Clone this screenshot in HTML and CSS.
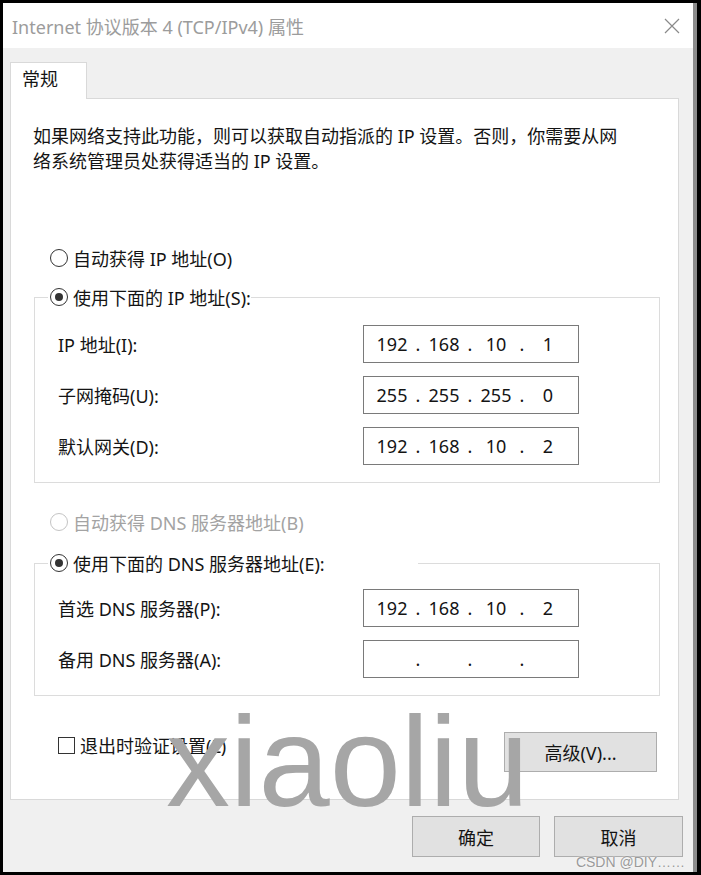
FILE: index.html
```html
<!DOCTYPE html>
<html lang="zh-CN">
<head>
<meta charset="utf-8">
<title>Internet 协议版本 4 (TCP/IPv4) 属性</title>
<link rel="stylesheet" href="styles.css">
</head>
<body>
<div class="window">
  <div class="titlebar">
    <span class="title">Internet 协议版本 4 (TCP/IPv4) 属性</span>
    <svg class="close" viewBox="0 0 16 16" width="16" height="16"><path d="M1 1 L15 15 M15 1 L1 15" stroke="#8a8a8a" stroke-width="1.2" fill="none"/></svg>
  </div>
  <div class="content">
    <div class="tab">常规</div>
    <div class="panel">
      <p class="desc">如果网络支持此功能，则可以获取自动指派的 IP 设置。否则，你需要从网<br>络系统管理员处获得适当的 IP 设置。</p>

      <div class="radio-row first"><span class="radio"></span><span>自动获得 IP 地址(O)</span></div>

      <fieldset class="group g1">
        <legend class="legend"><span class="radio checked"></span><span>使用下面的 IP 地址(S):</span></legend>
        <div class="rows">
          <span class="label">IP 地址(I):</span>
          <div class="ip"><span class="oct">192</span><span class="dot">.</span><span class="oct">168</span><span class="dot">.</span><span class="oct">10</span><span class="dot">.</span><span class="oct">1</span></div>
          <span class="label">子网掩码(U):</span>
          <div class="ip"><span class="oct">255</span><span class="dot">.</span><span class="oct">255</span><span class="dot">.</span><span class="oct">255</span><span class="dot">.</span><span class="oct">0</span></div>
          <span class="label">默认网关(D):</span>
          <div class="ip"><span class="oct">192</span><span class="dot">.</span><span class="oct">168</span><span class="dot">.</span><span class="oct">10</span><span class="dot">.</span><span class="oct">2</span></div>
        </div>
      </fieldset>

      <div class="radio-row disabled"><span class="radio"></span><span>自动获得 DNS 服务器地址(B)</span></div>

      <fieldset class="group g2">
        <legend class="legend wide"><span class="radio checked"></span><span>使用下面的 DNS 服务器地址(E):</span></legend>
        <div class="rows">
          <span class="label">首选 DNS 服务器(P):</span>
          <div class="ip"><span class="oct">192</span><span class="dot">.</span><span class="oct">168</span><span class="dot">.</span><span class="oct">10</span><span class="dot">.</span><span class="oct">2</span></div>
          <span class="label">备用 DNS 服务器(A):</span>
          <div class="ip"><span class="oct"></span><span class="dot">.</span><span class="oct"></span><span class="dot">.</span><span class="oct"></span><span class="dot">.</span><span class="oct"></span></div>
        </div>
      </fieldset>

      <div class="panel-footer">
        <div class="check-row"><span class="checkbox"></span><span>退出时验证设置(L)</span></div>
        <button class="btn adv">高级(V)...</button>
      </div>
    </div>
    <div class="dialog-buttons">
      <button class="btn ok">确定</button>
      <button class="btn cancel">取消</button>
    </div>
  </div>
</div>
<div class="watermark">xiaoliu</div>
<div class="csdn">CSDN @DIY……</div>
</body>
</html>
```
FILE: styles.css
```css
html, body {
  margin: 0;
  padding: 0;
  background: #000;
}
body {
  width: 701px;
  height: 875px;
  overflow: hidden;
  position: relative;
  font-family: "Noto Sans", "Noto Sans CJK SC", sans-serif;
  font-size: 18px;
  color: #141414;
}
.window {
  margin: 3px 0 0 3px;
  width: 690px;
  height: 869px;
  border-right: 4px solid #8c8c8c;
  background: #f0f0f0;
  display: flex;
  flex-direction: column;
}
.titlebar {
  flex: none;
  height: 45px;
  background: #fff;
  display: flex;
  align-items: center;
  justify-content: space-between;
  padding: 0 13px 0 9px;
}
.title {
  color: #9c9c9c;
  font-size: 18px;
}
.close {
  display: block;
}
.content {
  flex: 1;
  padding: 14px 0 0 7px;
}
.tab {
  position: relative;
  z-index: 1;
  box-sizing: border-box;
  width: 77px;
  height: 37px;
  margin-bottom: -1px;
  border: 1px solid #d9d9d9;
  border-bottom: none;
  background: #fff;
  padding-left: 11px;
  line-height: 32px;
}
.panel {
  box-sizing: border-box;
  width: 669px;
  height: 702px;
  border: 1px solid #d9d9d9;
  background: #fff;
  padding: 25px 0 0 22px;
}
.desc {
  margin: 0;
  line-height: 25px;
  white-space: nowrap;
}
.radio-row {
  display: flex;
  align-items: center;
  height: 26px;
  margin-left: 17px;
}
.radio-row.first {
  margin-top: 71px;
}
.radio-row.disabled {
  margin-top: 26px;
  color: #a3a3a3;
}
.radio {
  box-sizing: border-box;
  width: 18px;
  height: 18px;
  border: 1px solid #333;
  border-radius: 50%;
  background: #fff;
  margin-right: 5px;
  display: flex;
  align-items: center;
  justify-content: center;
  flex: none;
}
.disabled .radio {
  border-color: #c4c4c4;
}
.radio.checked::after {
  content: "";
  width: 8px;
  height: 8px;
  border-radius: 50%;
  background: #333;
}
.group {
  margin: 0 18px 0 1px;
  border: 1px solid #dcdcdc;
  padding: 15px 0 17px 23px;
  min-width: 0;
}
.g1 {
  margin-top: 13px;
}
.g2 {
  margin-top: 15px;
  padding-top: 13px;
}
.legend {
  display: flex;
  align-items: center;
  height: 26px;
  padding: 0 0 0 2px;
  margin-left: -10px;
  background: #fff;
}
.legend.wide {
  width: 370px;
  box-sizing: border-box;
}
.rows {
  display: grid;
  grid-template-columns: 305px 216px;
  row-gap: 13px;
  align-items: center;
}
.ip {
  box-sizing: border-box;
  height: 38px;
  border: 1px solid #7a7a7a;
  background: #fff;
  display: flex;
  align-items: center;
  padding-left: 8px;
}
.oct {
  width: 40px;
  text-align: center;
}
.dot {
  width: 12px;
  text-align: center;
}
.panel-footer {
  display: flex;
  justify-content: space-between;
  align-items: flex-start;
  margin: 36px 21px 0 25px;
}
.check-row {
  display: flex;
  align-items: center;
  height: 26px;
}
.checkbox {
  box-sizing: border-box;
  width: 17px;
  height: 17px;
  border: 1px solid #333;
  background: #fff;
  margin-right: 5px;
}
.btn {
  box-sizing: border-box;
  border: 1px solid #adadad;
  background: #e1e1e1;
  font-family: inherit;
  font-size: 18px;
  color: #141414;
  padding: 0;
}
.adv {
  width: 153px;
  height: 40px;
}
.dialog-buttons {
  display: flex;
  justify-content: flex-end;
  gap: 14px;
  margin: 16px 10px 0 0;
}
.ok {
  width: 128px;
  height: 41px;
}
.cancel {
  width: 129px;
  height: 41px;
}
.watermark {
  position: absolute;
  left: 166px;
  top: 698px;
  font-family: "Liberation Sans", Arial, sans-serif;
  font-size: 128px;
  line-height: 1;
  color: #a6a6a6;
}
.csdn {
  position: absolute;
  right: 16px;
  top: 854px;
  font-family: "Liberation Sans", Arial, sans-serif;
  font-size: 14px;
  line-height: 16px;
  color: #9a9a9a;
  text-shadow: 0 0 2px #fff;
}
```
